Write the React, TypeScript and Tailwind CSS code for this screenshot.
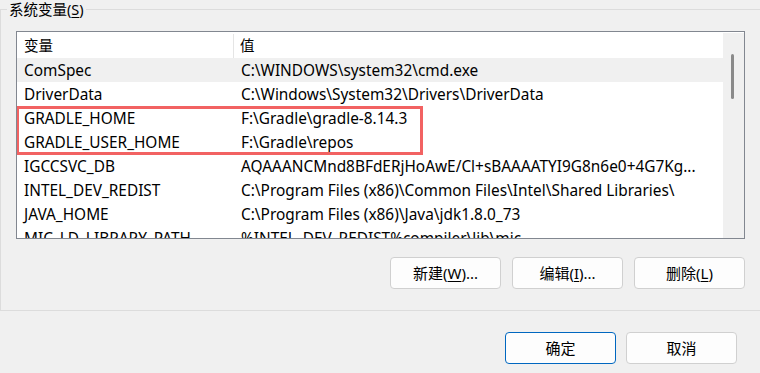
import React from "react";

const rows: [string, string][] = [
  ["ComSpec", "C:\\WINDOWS\\system32\\cmd.exe"],
  ["DriverData", "C:\\Windows\\System32\\Drivers\\DriverData"],
  ["GRADLE_HOME", "F:\\Gradle\\gradle-8.14.3"],
  ["GRADLE_USER_HOME", "F:\\Gradle\\repos"],
  ["IGCCSVC_DB", "AQAAANCMnd8BFdERjHoAwE/Cl+sBAAAATYI9G8n6e0+4G7Kg..."],
  ["INTEL_DEV_REDIST", "C:\\Program Files (x86)\\Common Files\\Intel\\Shared Libraries\\"],
  ["JAVA_HOME", "C:\\Program Files (x86)\\Java\\jdk1.8.0_73"],
  ["MIC_LD_LIBRARY_PATH", "%INTEL_DEV_REDIST%compiler\\lib\\mic"],
];

const font = { fontFamily: '"Noto Sans", "Noto Sans CJK SC", sans-serif' };

function Btn({ children, primary }: { children: React.ReactNode; primary?: boolean }) {
  return (
    <button
      className={
        primary
          ? "w-[111px] h-[32px] rounded-[4px] border border-[#0067c0] bg-[#fdfdfd] text-[15px] text-black flex items-center justify-center pt-[1px]"
          : "w-[111px] h-[32px] rounded-[4px] border border-[#d0d0d0] bg-[#fdfdfd] text-[15px] text-black flex items-center justify-center pt-[1px]"
      }
    >
      {children}
    </button>
  );
}

export default function App() {
  return (
    <div className="w-[760px] h-[373px] bg-[#f0f0f0] overflow-hidden text-black" style={font}>
      <div className="relative mt-[9px] h-[302px] border-t border-l border-b border-[#dcdcdc] pt-[21px] pl-[15px] pr-[15px]">
        <div className="absolute left-[6px] top-[-11px] px-[2px] bg-[#f0f0f0] text-[14.5px] leading-[20px]">
          系统变量(<span className="underline underline-offset-2">S</span>)
        </div>
        <div className="relative w-[729px] h-[208px] border border-[#828790] bg-white flex overflow-hidden">
          <div className="flex-1 flex flex-col">
            <div className="h-[26px] flex items-center text-[14.5px] shrink-0 pt-[2px]">
              <div className="w-[217px] pl-[7px] h-full flex items-center border-r border-[#e5e5e5]">变量</div>
              <div className="pl-[6px]">值</div>
            </div>
            {rows.map(([k, v], i) => (
              <div
                key={k}
                className={
                  i === 0
                    ? "h-[24px] flex items-center text-[15.4px] shrink-0 bg-[#f0f0f0] whitespace-nowrap pt-[2px]"
                    : "h-[24px] flex items-center text-[15.4px] shrink-0 whitespace-nowrap pt-[2px]"
                }
              >
                <div className="w-[217px] pl-[7px] shrink-0">{k}</div>
                <div className="pl-[7px]">{v}</div>
              </div>
            ))}
          </div>
          <div className="w-[21px] shrink-0 bg-[#f0f0f0] mt-[1px] relative">
            <div className="absolute left-[8px] top-[21px] w-[3px] h-[45px] rounded-full bg-[#8a8a8a]" />
          </div>
          <div className="absolute left-[-1px] top-[74px] w-[407px] h-[49px] border-[3px] border-[#f26262]" />
        </div>
        <div className="flex justify-end gap-[11px] mt-[18px] pr-[0px]">
          <Btn>
            新建(<span className="underline underline-offset-2">W</span>)...
          </Btn>
          <Btn>
            编辑(<span className="underline underline-offset-2">I</span>)...
          </Btn>
          <Btn>
            删除(<span className="underline underline-offset-2">L</span>)
          </Btn>
        </div>
      </div>
      <div className="flex justify-end gap-[10px] pr-[23px] mt-[21px]">
        <Btn primary>确定</Btn>
        <Btn>取消</Btn>
      </div>
    </div>
  );
}
